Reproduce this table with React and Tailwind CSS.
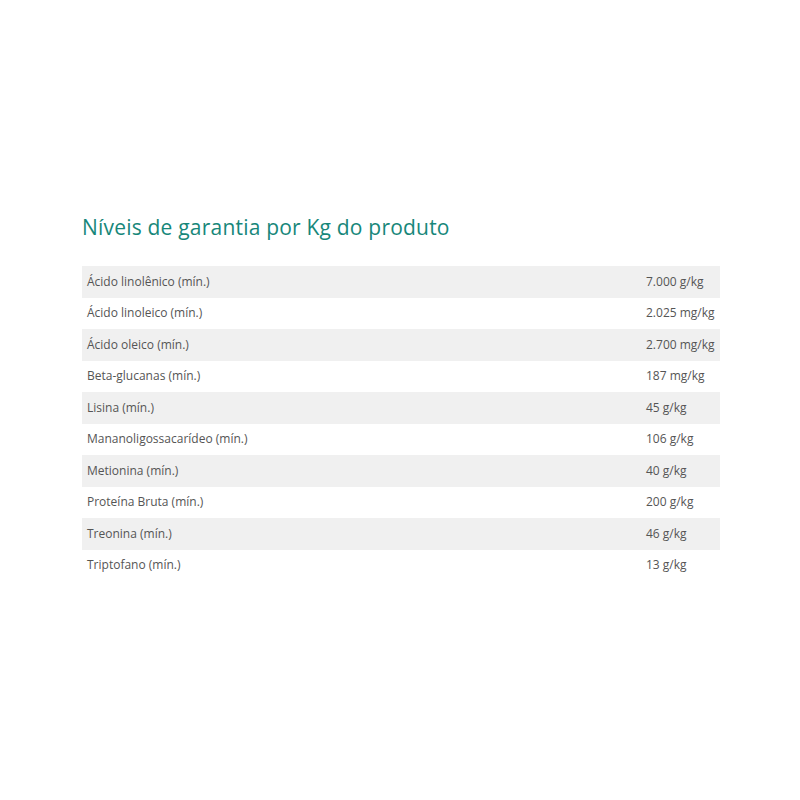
import React from 'react';

const rows = [
  ['Ácido linolênico (mín.)', '7.000 g/kg'],
  ['Ácido linoleico (mín.)', '2.025 mg/kg'],
  ['Ácido oleico (mín.)', '2.700 mg/kg'],
  ['Beta-glucanas (mín.)', '187 mg/kg'],
  ['Lisina (mín.)', '45 g/kg'],
  ['Mananoligossacarídeo (mín.)', '106 g/kg'],
  ['Metionina (mín.)', '40 g/kg'],
  ['Proteína Bruta (mín.)', '200 g/kg'],
  ['Treonina (mín.)', '46 g/kg'],
  ['Triptofano (mín.)', '13 g/kg'],
];

const App = () => {
  return (
    <div className="min-h-[800px] bg-white font-['Open_Sans',sans-serif]">
      <div className="pt-[212px] px-[82px] w-[800px]">
        <h2 className="text-[21px] leading-[30px] font-medium text-[#17877a] tracking-[0.2px]">
          Níveis de garantia por Kg do produto
        </h2>

        <div className="mt-[24px] w-[638px]">
          {rows.map(([name, value], i) => (
            <div
              key={name}
              className={`grid grid-cols-[1fr_79px] h-[31.5px] items-center text-[12px] text-[#555] ${i % 2 === 0 ? 'bg-[#f0f0f0]' : 'bg-white'}`}
            >
              <span className="pl-[5px]">{name}</span>
              <span className="pl-[5px]">{value}</span>
            </div>
          ))}
        </div>
      </div>
    </div>
  );
};

export default App;
